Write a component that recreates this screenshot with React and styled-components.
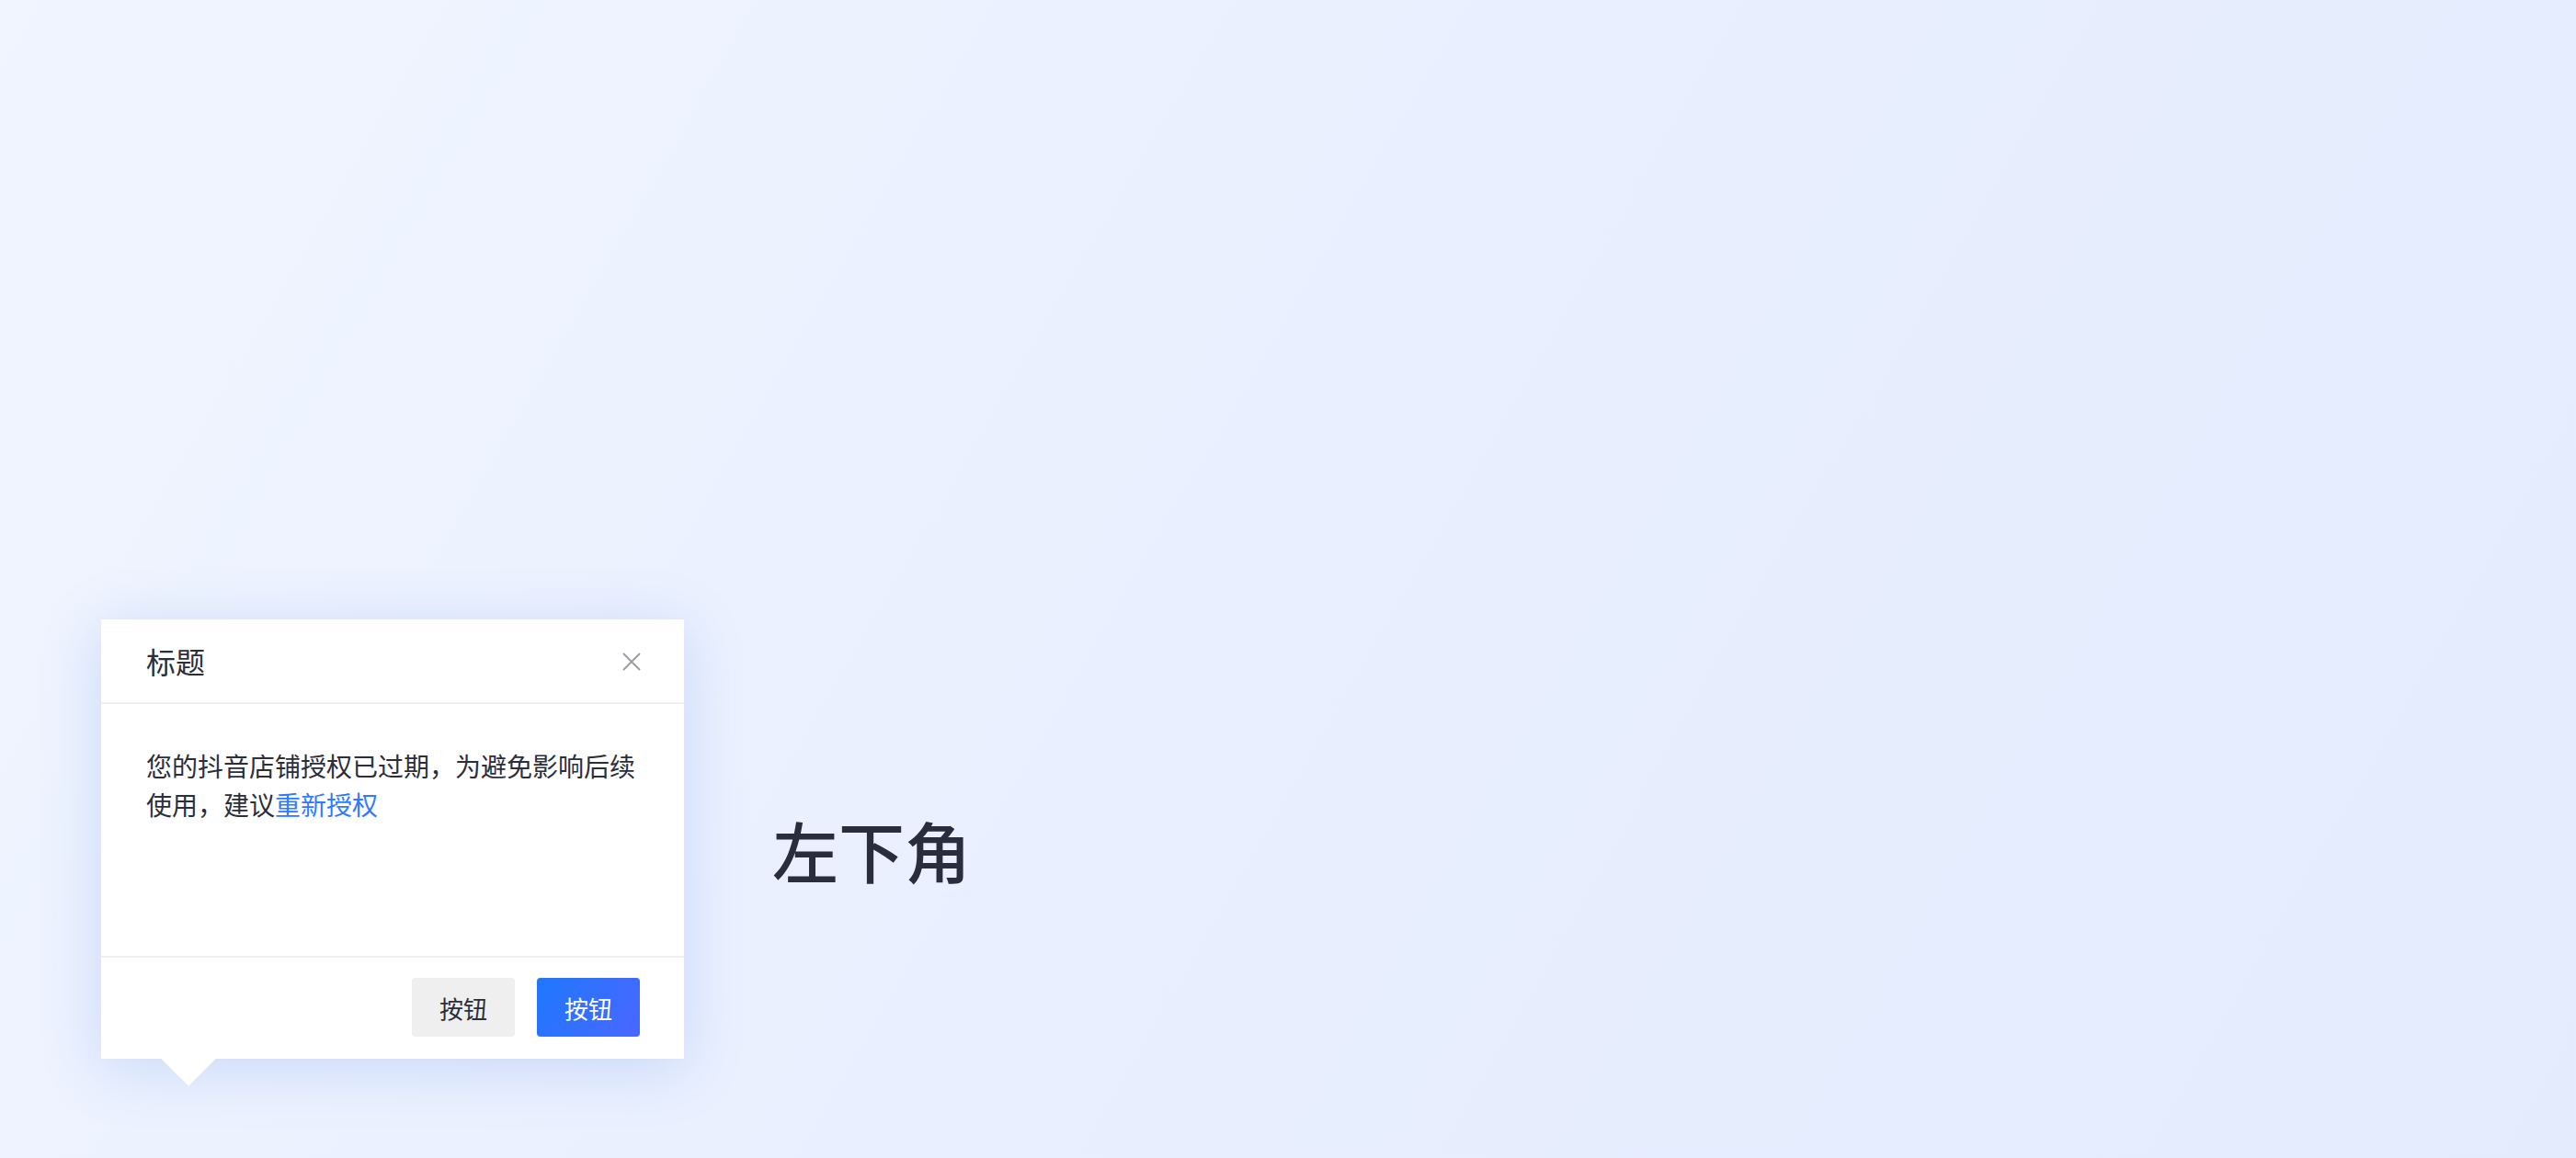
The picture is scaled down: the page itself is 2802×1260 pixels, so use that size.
import React from 'react';
import styled, { createGlobalStyle } from 'styled-components';

const FONT = '"Noto Sans CJK SC", "Noto Sans", sans-serif';

const GlobalStyle = createGlobalStyle`
  html, body {
    margin: 0;
    padding: 0;
  }
  body {
    font-family: ${FONT};
    background: #eef3fe;
  }
`;

const Stage = styled.main`
  width: 2802px;
  height: 1260px;
  box-sizing: border-box;
  padding: 674px 0 0 110px;
  display: flex;
  align-items: flex-start;
  gap: 96px;
  background: linear-gradient(120deg, #f0f5ff 0%, #e9effe 50%, #e3ebfd 100%);
  overflow: hidden;
`;

const Popover = styled.section`
  position: relative;
  width: 634px;
  background: #ffffff;
  box-shadow: 0 10px 60px rgba(78, 126, 232, 0.22);

  /* pointer under the bottom-left corner */
  &::after {
    content: '';
    position: absolute;
    left: 74px;
    bottom: -21px;
    width: 42px;
    height: 42px;
    background: #ffffff;
    transform: rotate(45deg);
  }
`;

const Header = styled.header`
  height: 90px;
  display: flex;
  align-items: center;
  justify-content: space-between;
  padding: 0 47px 0 49px;
  border-bottom: 2px solid #f0f0f2;
`;

const Title = styled.h3`
  margin: 0;
  font-size: 32px;
  font-weight: 400;
  line-height: 1;
  color: #2b2e3b;
`;

const CloseButton = styled.button`
  display: flex;
  align-items: center;
  justify-content: center;
  width: 20px;
  height: 20px;
  padding: 0;
  margin-top: 2px;
  border: 0;
  background: none;
  color: #9b9ca6;
  cursor: pointer;
`;

const Body = styled.div`
  height: 274px;
  box-sizing: border-box;
  padding: 46px 48px 0 49px;
  font-size: 28px;
  line-height: 42px;
  color: #2b2e3b;
`;

const Link = styled.a`
  color: #2f7bff;
  text-decoration: none;
`;

const Footer = styled.footer`
  position: relative;
  z-index: 1;
  display: flex;
  justify-content: flex-end;
  gap: 24px;
  padding: 22px 48px 24px;
  border-top: 2px solid #f0f0f2;
  background: #ffffff;
`;

const Button = styled.button`
  width: 112px;
  height: 64px;
  border: 0;
  border-radius: 4px;
  font-family: ${FONT};
  font-size: 26px;
  cursor: pointer;
  color: ${(p) => (p.$primary ? '#ffffff' : '#2b2e3b')};
  background: ${(p) =>
    p.$primary ? 'linear-gradient(120deg, #1e78ff 0%, #4a66ff 100%)' : '#efefef'};
`;

const Label = styled.h1`
  margin: 214px 0 0;
  font-size: 72px;
  font-weight: 500;
  line-height: 72px;
  color: #2a2d3b;
`;

const CloseIcon = () => (
  <svg width="20" height="20" viewBox="0 0 20 20" fill="none">
    <path d="M1 1L19 19M19 1L1 19" stroke="currentColor" strokeWidth="2" />
  </svg>
);

const App = () => (
  <>
    <GlobalStyle />
    <Stage>
      <Popover>
        <Header>
          <Title>标题</Title>
          <CloseButton aria-label="关闭">
            <CloseIcon />
          </CloseButton>
        </Header>
        <Body>
          您的抖音店铺授权已过期，为避免影响后续使用，建议
          <Link href="#">重新授权</Link>
        </Body>
        <Footer>
          <Button>按钮</Button>
          <Button $primary>按钮</Button>
        </Footer>
      </Popover>
      <Label>左下角</Label>
    </Stage>
  </>
);

export default App;
